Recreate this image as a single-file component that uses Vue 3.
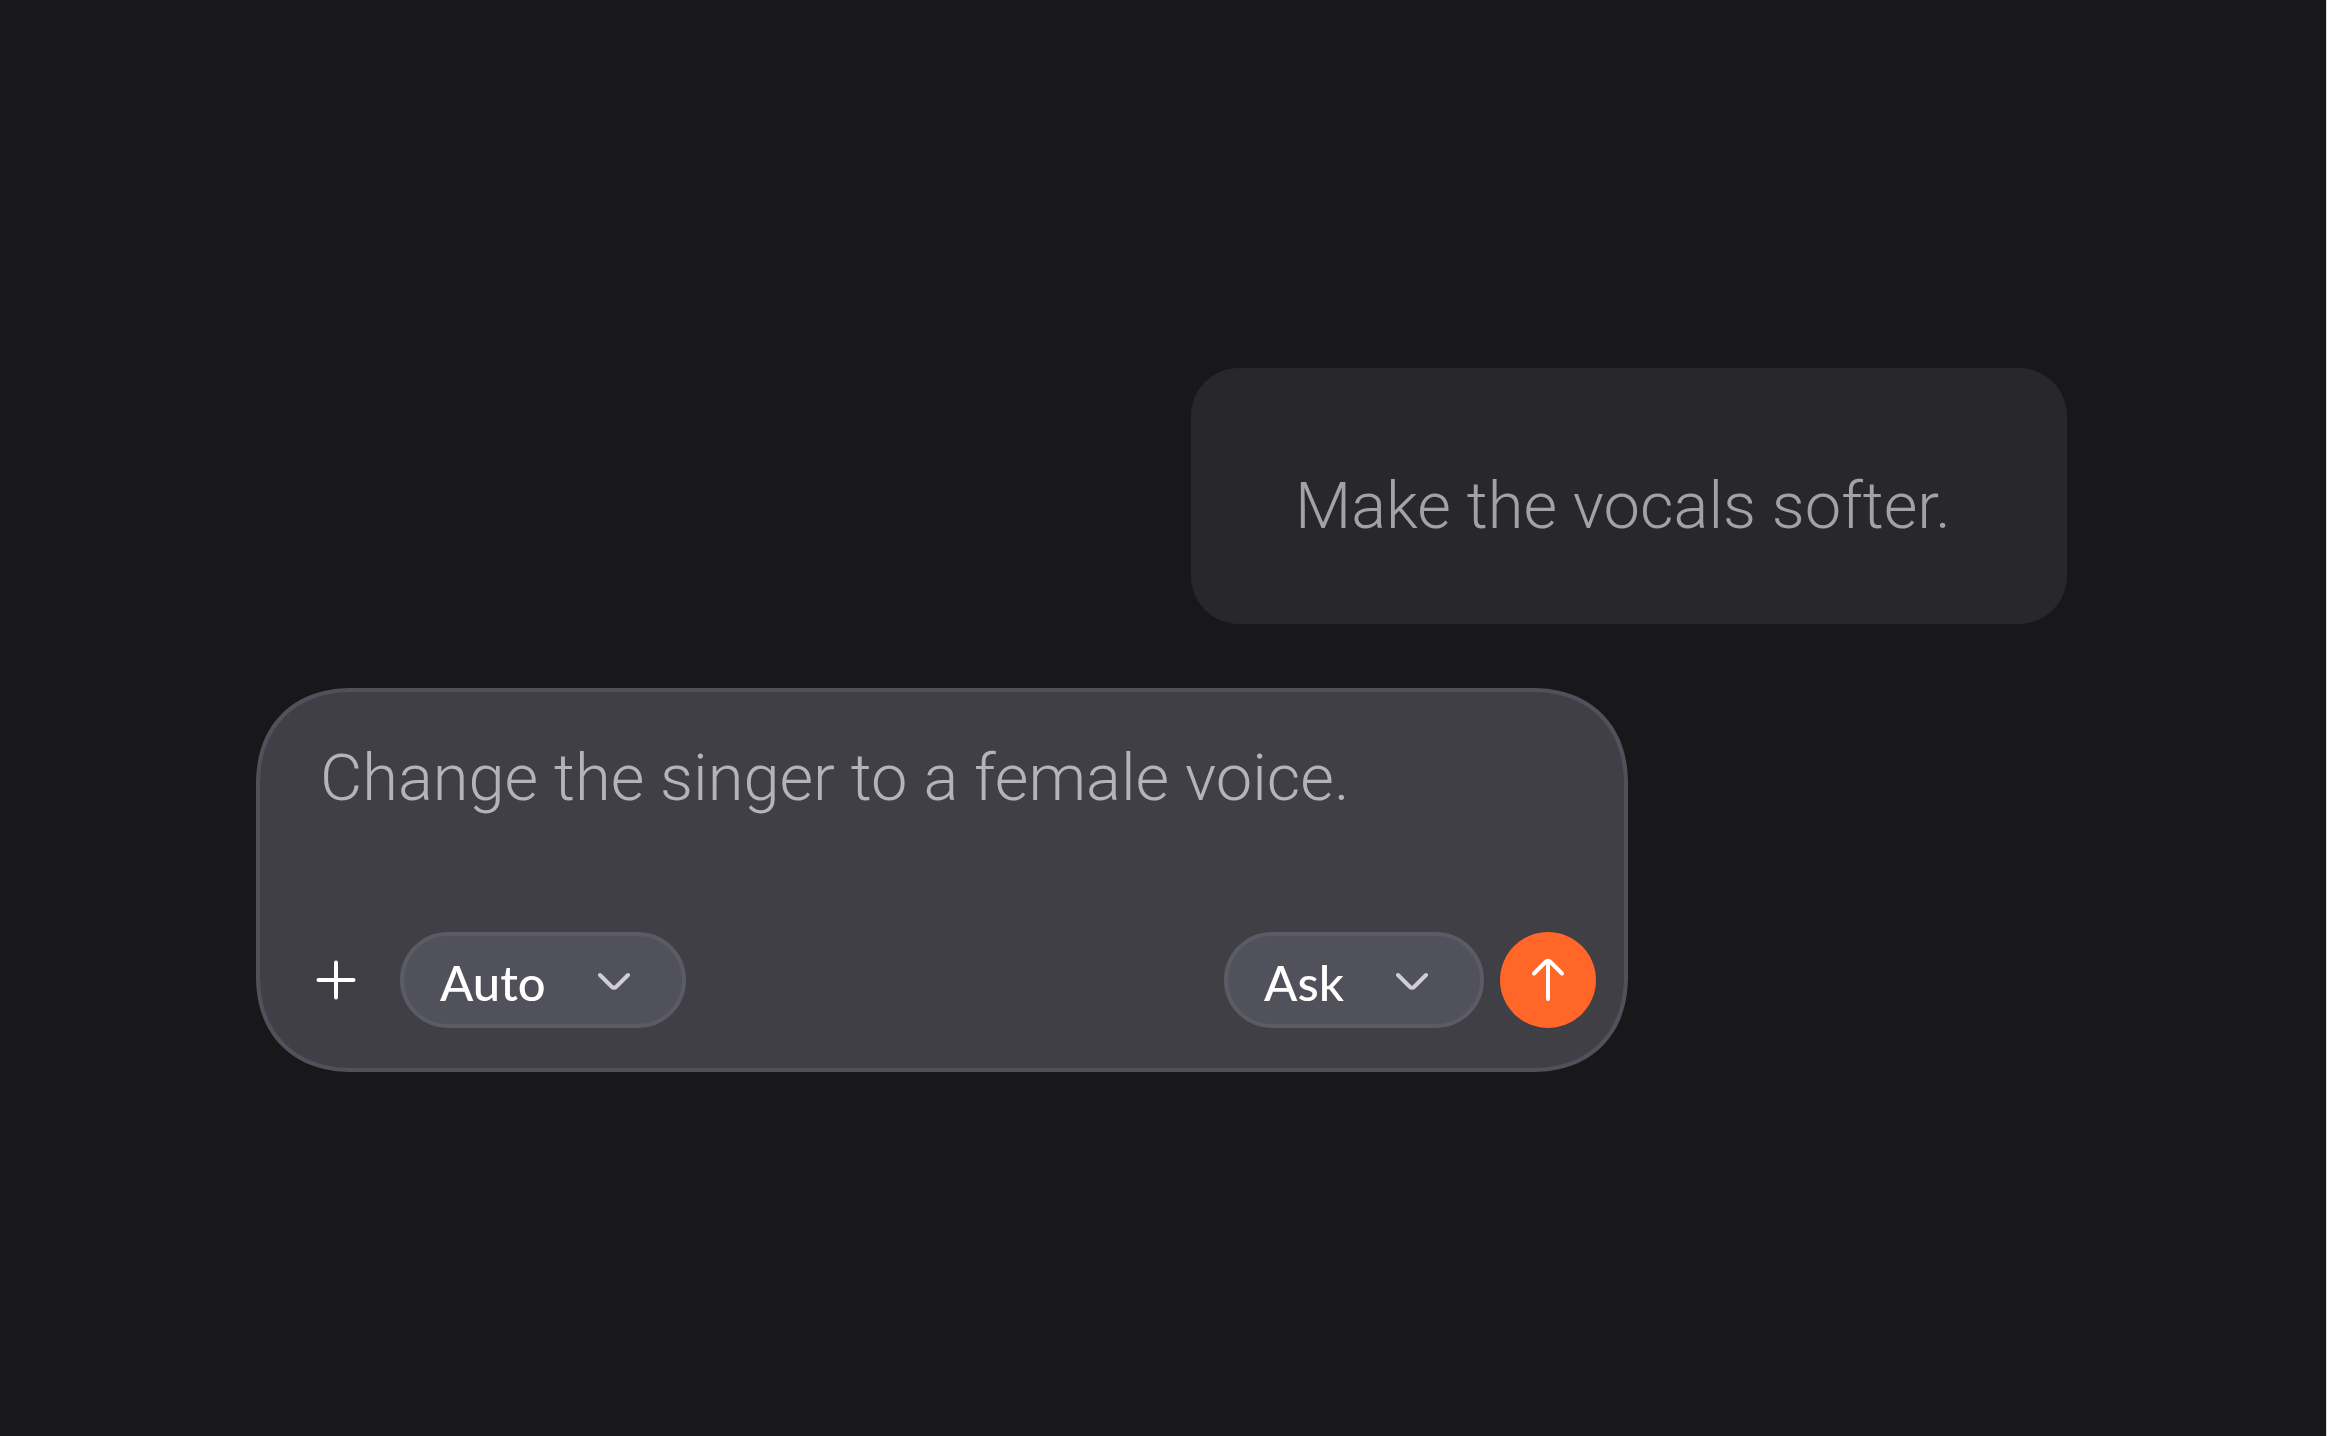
<script setup>
import { ref } from 'vue'

const message = ref('Make the vocals softer.')
const draft = ref('Change the singer to a female voice.')
const model = ref('Auto')
const mode = ref('Ask')
</script>

<template>
  <main class="page">
    <p class="bubble">{{ message }}</p>

    <form class="composer" @submit.prevent>
      <textarea v-model="draft" class="prompt" rows="1" aria-label="Message" spellcheck="false"></textarea>

      <div class="toolbar">
        <button class="add" type="button" aria-label="Add attachment">
          <svg viewBox="0 0 40 40" aria-hidden="true"><path d="M20 2.500V37.500M2.500 20H37.500" /></svg>
        </button>

        <label class="picker">
          <select v-model="model" aria-label="Model">
            <option>Auto</option>
          </select>
          <svg viewBox="0 0 32 20" aria-hidden="true"><path d="M2 3L13.500 14.500Q16 17 18.500 14.500L30 3" /></svg>
        </label>

        <label class="picker picker-mode">
          <select v-model="mode" aria-label="Mode">
            <option>Ask</option>
          </select>
          <svg viewBox="0 0 32 20" aria-hidden="true"><path d="M2 3L13.500 14.500Q16 17 18.500 14.500L30 3" /></svg>
        </label>

        <button class="send" type="submit" aria-label="Send">
          <svg viewBox="0 0 32 44" aria-hidden="true"><path d="M16 3V41M2 15.500L13.500 4Q16 1.500 18.500 4L30 15.500" /></svg>
        </button>
      </div>
    </form>
  </main>
</template>

<style>
body {
  margin: 0;
  background: #18181a;
}
</style>

<style scoped>
.page {
  box-sizing: border-box;
  min-height: 100vh;
  padding: 4px 259px 0 256px;
  display: flex;
  flex-direction: column;
  justify-content: center;
  gap: 64px;
  border-right: 1px solid #dcdcdc;
  background: #18181a;
}

.bubble,
.prompt {
  box-sizing: border-box;
  margin: 0;
  font-family: Roboto, "Liberation Sans", sans-serif;
  font-size: 65px;
  font-weight: 300;
  line-height: 80px;
}

.bubble {
  align-self: flex-end;
  min-width: 876px;
  padding: 98px 104px 78px;
  border-radius: 48px;
  background: #28272c;
  color: #a2a1a5;
}

.composer {
  box-sizing: border-box;
  width: 100%;
  max-width: 1372px;
  padding: 46px 28px 40px 48px;
  display: flex;
  flex-direction: column;
  gap: 114px;
  border: 4px solid #51505b;
  border-radius: 84px;
  background: #403f45;
}

@supports (corner-shape: squircle) {
  .composer {
    border-radius: 96px;
    corner-shape: superellipse(1.15);
  }
}

.prompt {
  width: 100%;
  height: 80px;
  padding: 0 12px;
  border: 0;
  outline: 0;
  resize: none;
  overflow: hidden;
  background: transparent;
  color: #b4b3b8;
}

.toolbar {
  display: flex;
  align-items: center;
  gap: 16px;
}

.add,
.send {
  padding: 0;
  display: grid;
  place-items: center;
  border: 0;
  cursor: pointer;
}

.add {
  width: 56px;
  height: 56px;
  margin-right: 20px;
  background: transparent;
}

.add svg {
  width: 40px;
  height: 40px;
}

.send {
  width: 96px;
  height: 96px;
  border-radius: 50%;
  background: #ff6628;
}

.send svg {
  width: 32px;
  height: 44px;
}

svg {
  fill: none;
  stroke: #fff;
  stroke-width: 4;
  stroke-linecap: round;
  stroke-linejoin: round;
}

.picker {
  position: relative;
  display: flex;
}

.picker-mode {
  margin-left: auto;
}

.picker select {
  box-sizing: border-box;
  height: 96px;
  padding: 4px 136px 0 36px;
  appearance: none;
  border: 4px solid #5b5b65;
  border-radius: 48px;
  outline: 0;
  background: #51515b;
  color: #fff;
  font-family: Lato, sans-serif;
  font-size: 49px;
  font-weight: 500;
  cursor: pointer;
}

.picker svg {
  position: absolute;
  top: 40px;
  right: 56px;
  width: 32px;
  height: 20px;
  stroke: #cfced6;
  pointer-events: none;
}
</style>
